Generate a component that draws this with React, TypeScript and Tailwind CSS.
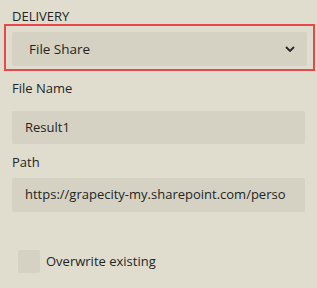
import React from "react";

const font = { fontFamily: '"Open Sans", "Noto Sans", sans-serif' };

export default function App() {
  return (
    <div
      className="flex h-[288px] w-[317px] flex-col bg-[#e0ddcf] pt-[8px] text-[#252525]"
      style={font}
    >
      <div className="h-[16px] pl-[12px] text-[13px] font-medium leading-[16px]">DELIVERY</div>

      {/* delivery type, highlighted */}
      <div className="ml-[4px] w-[311px] border-2 border-[#e8474b] px-[6px] pb-[3px] pt-[6px]">
        <div className="flex h-[34px] items-center justify-between rounded-[2px] bg-[#d5d2c3] pl-[17px] pr-[12px] text-[13.5px]">
          <span>File Share</span>
          <svg width="10" height="6" viewBox="0 0 10 6">
            <path d="M1 1 L5 5 L9 1" fill="none" stroke="#2a2226" strokeWidth="1.8" />
          </svg>
        </div>
      </div>

      <div className="flex flex-col px-[12px] pt-[7px]">
        <div className="h-[20px] text-[13px] leading-[20px]">File Name</div>
        <div className="mt-[13px] flex h-[33px] items-center rounded-[2px] bg-[#d5d2c3] pl-[13px] text-[13px]">
          Result1
        </div>
        <div className="mt-[8px] h-[20px] text-[13px] leading-[20px]">Path</div>
        <div className="mt-[6px] flex h-[34px] items-center overflow-hidden whitespace-nowrap rounded-[2px] bg-[#d5d2c3] pl-[13px] pr-[6px] text-[13px]">
          https://grapecity-my.sharepoint.com/perso
        </div>
      </div>

      <div className="mt-[38px] flex items-center pl-[18px]">
        <div className="h-[23px] w-[22px] rounded-[2px] bg-[#d5d2c3]" />
        <span className="ml-[6px] text-[13px]">Overwrite existing</span>
      </div>
    </div>
  );
}
